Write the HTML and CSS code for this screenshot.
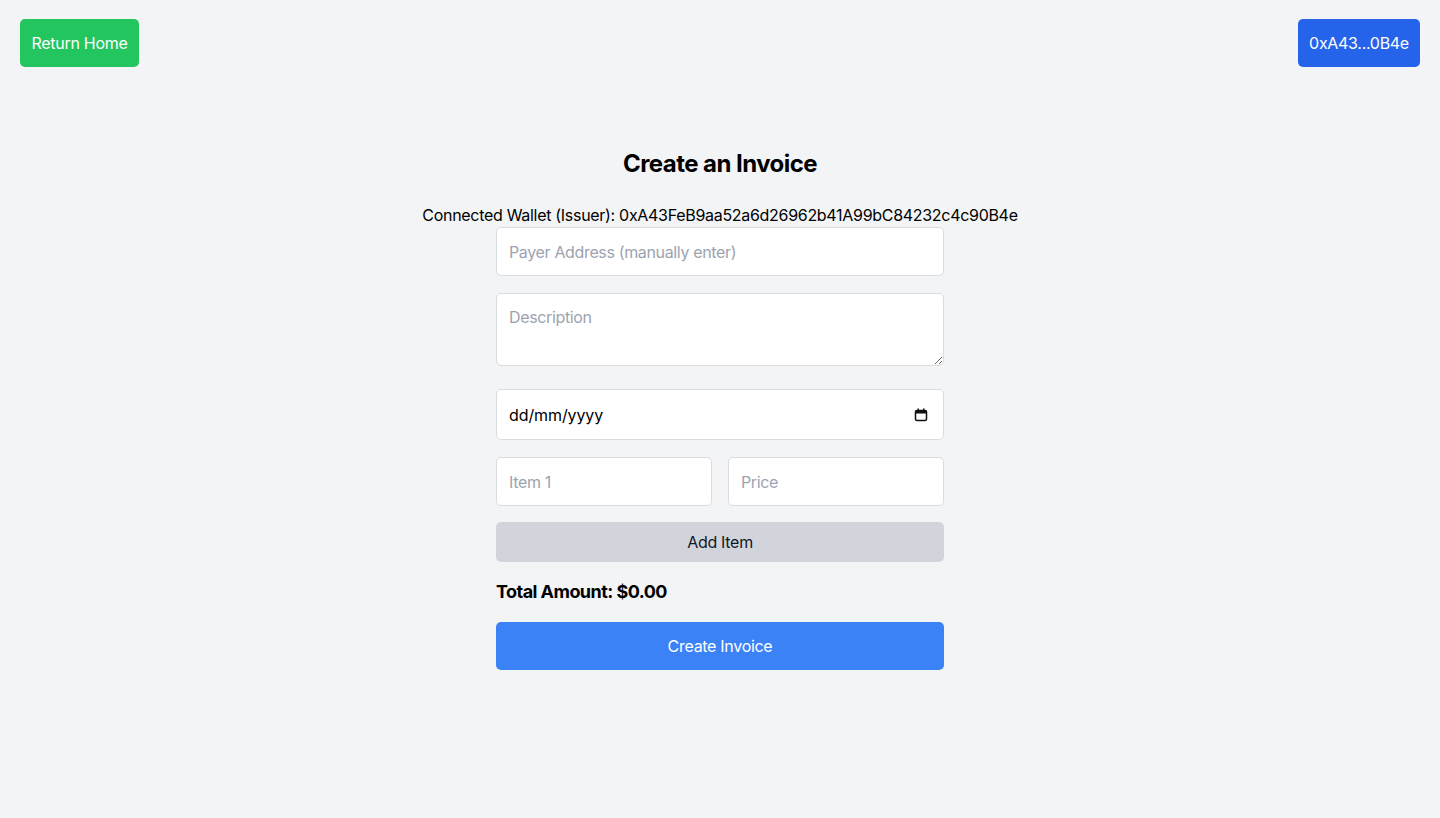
FILE: index.html
```html
<!DOCTYPE html>
<html lang="en">
<head>
<meta charset="utf-8">
<title>Create an Invoice</title>
<link rel="stylesheet" href="styles.css">
</head>
<body>
<header class="topbar">
  <button class="btn btn-green">Return Home</button>
  <button class="btn btn-blue-dark">0xA43...0B4e</button>
</header>
<main class="main">
  <h1 class="title">Create an Invoice</h1>
  <p class="wallet">Connected Wallet (Issuer): 0xA43FeB9aa52a6d26962b41A99bC84232c4c90B4e</p>
  <form class="form">
    <input class="field field-payer" type="text" placeholder="Payer Address (manually enter)">
    <textarea class="field field-desc" placeholder="Description"></textarea>
    <div class="field field-date">
      <span class="date-text">dd/mm/yyyy</span>
      <svg class="cal" width="14" height="14" viewBox="0 0 14 14" aria-hidden="true">
        <rect x="1.5" y="2.5" width="11" height="10" rx="1.5" fill="none" stroke="#111" stroke-width="1.5"/>
        <rect x="1.5" y="2.5" width="11" height="3" fill="#111"/>
        <rect x="3.5" y="0.5" width="1.5" height="3" fill="#111"/>
        <rect x="9" y="0.5" width="1.5" height="3" fill="#111"/>
      </svg>
    </div>
    <div class="item-row">
      <input class="field field-half" type="text" placeholder="Item 1">
      <input class="field field-half" type="text" placeholder="Price">
    </div>
    <button type="button" class="btn btn-gray">Add Item</button>
    <p class="total">Total Amount: $0.00</p>
    <button type="button" class="btn btn-blue">Create Invoice</button>
  </form>
</main>
</body>
</html>
```

FILE: styles.css
```css
* { box-sizing: border-box; }
html, body { margin: 0; padding: 0; }
body {
  background: #f3f4f6;
  font-family: Inter, "Noto Sans", "Liberation Sans", sans-serif;
  font-size: 16px;
  color: #000;
  min-height: 818px;
}
.topbar {
  display: flex;
  justify-content: space-between;
  padding: 19px 20px 0 20px;
}
.btn {
  font-family: inherit;
  font-size: 16px;
  line-height: 24px;
  border: none;
  border-radius: 5px;
  color: #fff;
  cursor: pointer;
  letter-spacing: -0.3px;
}
.btn-green {
  background: #22c55e;
  height: 48px;
  width: 119px;
  padding: 0;
}
.btn-blue-dark {
  background: #2563eb;
  height: 48px;
  width: 122px;
  padding: 0;
}
.main {
  display: flex;
  flex-direction: column;
  align-items: center;
}
.title {
  margin: 81px 0 0 0;
  font-size: 24px;
  line-height: 32px;
  font-weight: 700;
  letter-spacing: -0.55px;
}
.wallet {
  margin: 23px 0 0 0;
  line-height: 24px;
  letter-spacing: -0.3px;
}
.form {
  width: 448px;
  display: flex;
  flex-direction: column;
}
.field {
  display: block;
  width: 100%;
  background: #fff;
  border: 1px solid #d9dbdf;
  border-radius: 5px;
  font-family: inherit;
  font-size: 16px;
  color: #000;
  padding: 0 12px;
  outline: none;
  letter-spacing: -0.35px;
}
.field::placeholder { color: #9ca3af; }
.field-payer { height: 49px; }
.field-desc {
  height: 73px;
  margin-top: 17px;
  padding-top: 12px;
  resize: vertical;
  line-height: 22px;
}
.field-date {
  height: 51px;
  margin-top: 23px;
  display: flex;
  align-items: center;
  justify-content: space-between;
  padding-right: 15px;
}
.date-text { letter-spacing: -0.1px; }
.cal { display: block; }
.item-row {
  display: flex;
  gap: 16px;
  margin-top: 17px;
}
.field-half { height: 49px; flex: 1; }
.btn-gray {
  background: #d1d5db;
  color: #111827;
  height: 40px;
  margin-top: 16px;
  width: 100%;
}
.total {
  margin: 20px 0 0 0;
  font-size: 18px;
  line-height: 20px;
  font-weight: 700;
  letter-spacing: -0.55px;
}
.btn-blue {
  background: #3b82f6;
  height: 48px;
  margin-top: 20px;
  width: 100%;
}
```
